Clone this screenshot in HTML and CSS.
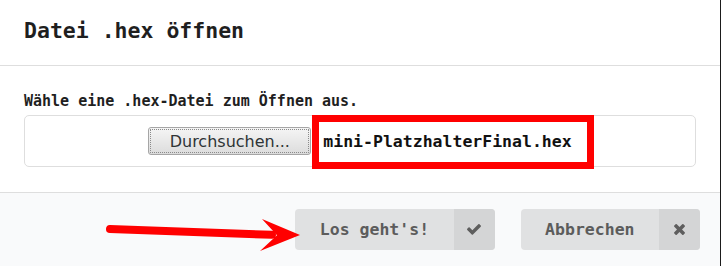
FILE: index.html
```html
<!DOCTYPE html>
<html lang="de">
<head>
<meta charset="utf-8">
<title>Datei .hex öffnen</title>
<link rel="stylesheet" href="styles.css">
</head>
<body>
<div class="dialog">
  <div class="header">Datei .hex öffnen</div>
  <div class="content">
    <div class="label">Wähle eine .hex-Datei zum Öffnen aus.</div>
    <div class="filebox">
      <div class="filepick">
        <button class="browse">Durchsuchen...</button>
        <span class="fname">mini-PlatzhalterFinal.hex</span>
      </div>
      <div class="highlight"></div>
    </div>
  </div>
  <div class="actions">
    <button class="btn">
      <span class="btn-text">Los geht's!</span>
      <span class="btn-icon">
        <svg class="icon-check" viewBox="121 338 1550 1156"><path d="M1671 566q0 40-28 68l-724 724-136 136q-28 28-68 28t-68-28l-136-136-362-362q-28-28-28-68t28-68l136-136q28-28 68-28t68 28l294 295 656-657q28-28 68-28t68 28l136 136q28 28 28 68z"/></svg>
      </span>
    </button>
    <button class="btn">
      <span class="btn-text">Abbrechen</span>
      <span class="btn-icon">
        <svg class="icon-times" viewBox="110 358 1188 1196"><path d="M1298 1322q0 40-28 68l-136 136q-28 28-68 28t-68-28l-294-294-294 294q-28 28-68 28t-68-28l-136-136q-28-28-28-68t28-68l294-294-294-294q-28-28-28-68t28-68l136-136q28-28 68-28t68 28l294 294 294-294q28-28 68-28t68 28l136 136q28 28 28 68t-28 68l-294 294 294 294q28 28 28 68z"/></svg>
      </span>
    </button>
    <svg class="arrow" viewBox="0 0 720 73" width="720" height="73">
      <line x1="110" y1="36" x2="272" y2="41.8" stroke="#ff0000" stroke-width="8" stroke-linecap="round"/>
      <polygon points="262,26 300,42 260,58 277,42.3" fill="#ff0000"/>
    </svg>
  </div>
</div>
</body>
</html>
```

FILE: styles.css
```css
html, body {
  margin: 0;
  padding: 0;
  background: #ffffff;
}

.dialog {
  width: 720px;
  height: 266px;
  border-right: 1px solid #1b1b1b;
  display: flex;
  flex-direction: column;
  font-family: "DejaVu Sans Mono", "Liberation Mono", monospace;
  color: #1f1f1f;
  overflow: hidden;
  background: #ffffff;
}

.header {
  padding: 18px 24px 21px;
  font-size: 21.5px;
  line-height: 26px;
  font-weight: bold;
  color: #1f1f1f;
  border-bottom: 1px solid #dedede;
}

.content {
  padding: 26px 24px 25px;
  border-bottom: 1px solid #dedede;
}

.label {
  font-size: 15px;
  line-height: 18px;
  font-weight: bold;
  margin-bottom: 5px;
  color: #1f1f1f;
}

.filebox {
  position: relative;
  height: 52px;
  box-sizing: border-box;
  border: 1px solid #dedede;
  border-radius: 5px;
  display: flex;
  align-items: center;
  justify-content: center;
}

.filepick {
  display: flex;
  align-items: center;
  gap: 12px;
}

.browse {
  height: 28px;
  width: 163px;
  padding: 0;
  font-family: "DejaVu Sans", "Liberation Sans", sans-serif;
  font-size: 16px;
  color: #2e3436;
  border: 1px solid #a6a6a6;
  border-radius: 3px;
  background: linear-gradient(#f5f5f5, #dcdcdc);
  outline: 1px dotted #8a8a8a;
  outline-offset: -3px;
}

.fname {
  font-size: 16.5px;
  font-weight: bold;
  color: #111111;
}

.highlight {
  position: absolute;
  left: 287px;
  top: -1px;
  width: 282px;
  height: 54px;
  box-sizing: border-box;
  border: 7px solid #ff0000;
}

.actions {
  flex: 1;
  position: relative;
  background: #f9fafb;
  display: flex;
  justify-content: flex-end;
  align-items: flex-start;
  gap: 26px;
  padding: 16px 20px 0 0;
}

.btn {
  display: flex;
  height: 41px;
  padding: 0;
  border: 0;
  border-radius: 4px;
  overflow: hidden;
  background: #e0e1e2;
  font-family: "DejaVu Sans Mono", "Liberation Mono", monospace;
  font-weight: bold;
  font-size: 16.5px;
  color: #5c5c5c;
}

.btn-text {
  padding: 0 24.5px;
  display: flex;
  align-items: center;
}

.btn-icon {
  width: 41px;
  display: flex;
  align-items: center;
  justify-content: center;
  background: #d4d5d6;
}

.btn-icon svg {
  fill: #5e5e5e;
}

.icon-check {
  width: 14px;
  height: 10.5px;
}

.icon-times {
  width: 11px;
  height: 11px;
}

.arrow {
  position: absolute;
  left: 0;
  top: 0;
}
```
